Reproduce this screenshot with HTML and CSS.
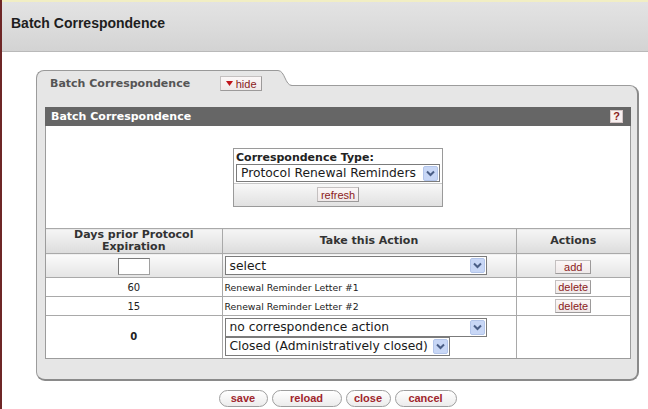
FILE: index.html
```html
<!DOCTYPE html>
<html>
<head>
<meta charset="utf-8">
<title>Batch Correspondence</title>
<link rel="stylesheet" href="styles.css">
</head>
<body>
<div class="page">
  <div class="topstrip"></div>
  <header class="header"><h1>Batch Correspondence</h1></header>
  <main class="main">
    <section class="panel">
      <div class="tabrow">
        <div class="tab">
          <span class="tab-label">Batch Correspondence</span>
          <button class="btn-sm btn-hide"><svg class="tri" width="7" height="5" viewBox="0 0 7 5"><path d="M0 0 H7 L3.5 5 Z" fill="#c0141b"/></svg> hide</button>
        </div>
        <svg class="tabcurve" width="14" height="16" viewBox="0 0 14 16">
          <path d="M0 0.5 C7 0.5 7 15.5 14 15.5 L14 16 L0 16 Z" fill="#e6e6e6"/>
          <path d="M0 0.5 C7 0.5 7 15.5 14 15.5" fill="none" stroke="#999" stroke-width="1"/>
        </svg>
      </div>
      <div class="panel-body">
        <div class="subhead"><span>Batch Correspondence</span><span class="help">?</span></div>
        <div class="content">
          <div class="typebox">
            <div class="typebox-top">
              <div class="typebox-label">Correspondence Type:</div>
              <div class="sel sel-type"><span>Protocol Renewal Reminders</span><svg class="arrow" width="15" height="15" viewBox="0 0 15 15"><rect x="0.5" y="0.5" width="14" height="14" rx="1.5" fill="#c8d7f6" stroke="#b3c5ea"/><path d="M4 5.5 L7.5 9 L11 5.5" fill="none" stroke="#4a5e86" stroke-width="2"/></svg></div>
            </div>
            <div class="typebox-bottom"><button class="btn-sm btn-refresh">refresh</button></div>
          </div>
          <table class="grid">
            <colgroup><col class="c1"><col class="c2"><col class="c3"></colgroup>
            <tr class="head">
              <th>Days prior Protocol<br>Expiration</th>
              <th>Take this Action</th>
              <th>Actions</th>
            </tr>
            <tr class="addrow">
              <td class="center"><input class="days" type="text"></td>
              <td><div class="sel sel-wide"><span>select</span><svg class="arrow" width="15" height="15" viewBox="0 0 15 15"><rect x="0.5" y="0.5" width="14" height="14" rx="1.5" fill="#c8d7f6" stroke="#b3c5ea"/><path d="M4 5.5 L7.5 9 L11 5.5" fill="none" stroke="#4a5e86" stroke-width="2"/></svg></div></td>
              <td class="center"><button class="btn-sm btn-row">add</button></td>
            </tr>
            <tr class="datarow">
              <td class="center">60</td>
              <td class="txt">Renewal Reminder Letter #1</td>
              <td class="center"><button class="btn-sm btn-row">delete</button></td>
            </tr>
            <tr class="datarow">
              <td class="center">15</td>
              <td class="txt">Renewal Reminder Letter #2</td>
              <td class="center"><button class="btn-sm btn-row">delete</button></td>
            </tr>
            <tr class="lastrow">
              <td class="center bold">0</td>
              <td>
                <div class="sel sel-wide"><span>no correspondence action</span><svg class="arrow" width="15" height="15" viewBox="0 0 15 15"><rect x="0.5" y="0.5" width="14" height="14" rx="1.5" fill="#c8d7f6" stroke="#b3c5ea"/><path d="M4 5.5 L7.5 9 L11 5.5" fill="none" stroke="#4a5e86" stroke-width="2"/></svg></div>
                <div class="sel sel-closed"><span>Closed (Administratively closed)</span><svg class="arrow" width="15" height="15" viewBox="0 0 15 15"><rect x="0.5" y="0.5" width="14" height="14" rx="1.5" fill="#c8d7f6" stroke="#b3c5ea"/><path d="M4 5.5 L7.5 9 L11 5.5" fill="none" stroke="#4a5e86" stroke-width="2"/></svg></div>
              </td>
              <td></td>
            </tr>
          </table>
        </div>
      </div>
    </section>
    <div class="actions">
      <button class="pill w-save">save</button>
      <button class="pill w-reload">reload</button>
      <button class="pill w-close">close</button>
      <button class="pill w-cancel">cancel</button>
    </div>
  </main>
</div>
</body>
</html>
```
FILE: styles.css
```css
* { box-sizing: border-box; }
html, body { margin: 0; padding: 0; background: #fff; }
body { font-family: "DejaVu Sans", Verdana, sans-serif; color: #222; }

.page { border-left: 2px solid #6e2626; min-height: 409px; }
.topstrip { height: 2px; background: #f1eec4; }
.header {
  height: 50px;
  background: linear-gradient(#e3e3e3, #dadada 60%, #d3d3d3);
  border-bottom: 1px solid #b9b9b9;
}
.header h1 {
  margin: 0;
  padding: 13px 0 0 9px;
  font: bold 14px/17px "Liberation Sans", Arial, sans-serif;
  color: #1e1e1e;
}

.main { padding-top: 18px; }
.panel { margin-left: 34px; width: 603px; }

.tabrow { display: flex; align-items: flex-start; }
.tab {
  position: relative;
  z-index: 1;
  width: 242px;
  height: 16px;
  margin-bottom: -1px;
  background: #e6e6e6;
  border: 1px solid #999;
  border-right: none;
  border-bottom: none;
  border-top-left-radius: 8px;
  display: flex;
  align-items: flex-start;
  padding: 6px 0 0 13px;
}
.tab-label { font-size: 11px; font-weight: bold; line-height: 13px; color: #555; white-space: nowrap; }
.tabcurve { position: relative; z-index: 1; display: block; margin-bottom: -1px; }

.btn-sm {
  font: 11px/12px "Liberation Sans", Arial, sans-serif;
  color: #8b1a1a;
  background: linear-gradient(#fbf7f7, #efe9e9);
  border: 1px solid #c4c0c0;
  border-right-color: #9c9a9a;
  border-bottom-color: #9c9a9a;
  height: 15px;
  padding: 0;
  margin: 0;
  cursor: pointer;
}
.btn-hide {
  width: 42px;
  margin-left: 30px;
  margin-top: -1px;
  display: inline-flex;
  align-items: center;
  justify-content: center;
  gap: 3px;
}
.tri { display: block; }

.panel-body {
  background: #e6e6e6;
  border: 1px solid #9c9c9c;
  border-right: 2px solid #8a8a8a;
  border-bottom: 2px solid #8a8a8a;
  border-radius: 0 9px 9px 9px;
  padding: 21px 6px 20px 8px;
}
.subhead {
  height: 19px;
  background: #666;
  color: #fff;
  font-size: 11px;
  font-weight: bold;
  display: flex;
  align-items: center;
  justify-content: space-between;
  padding: 0 8px 0 6px;
}
.help {
  width: 13px;
  height: 13px;
  background: #f7f0f0;
  border: 1px solid #d6c6c6;
  color: #8b1a1a;
  font: bold 11px/11px "Liberation Sans", Arial, sans-serif;
  text-align: center;
}

.content {
  background: #fff;
  border: 1px solid #9c9c9c;
  border-top: none;
  padding-top: 22px;
}

.typebox {
  width: 210px;
  margin: 0 auto 21px;
  border: 1px solid #9a9a9a;
}
.typebox-top { padding: 2px 2px 1px 2px; }
.typebox-label { font-size: 11px; font-weight: bold; line-height: 13px; color: #222; }
.typebox-bottom {
  border-top: 1px solid #c8c8c8;
  background: linear-gradient(#f8f8f8, #e1e1e1);
  display: flex;
  justify-content: center;
  padding: 3px 0 4px;
}
.btn-refresh { width: 42px; }

.sel {
  display: flex;
  align-items: center;
  justify-content: space-between;
  background: #fff;
  border: 1px solid #7b7b7b;
  height: 18px;
  padding: 0 1px 0 4px;
  font-size: 12.3px;
  color: #1a1a1a;
  white-space: nowrap;
}
.sel .arrow { display: block; flex: none; }
.sel-type { width: 204px; }
.sel-wide { width: 262px; height: 19px; }
.sel-closed { width: 225px; height: 19px; }

.grid { width: 100%; border-collapse: collapse; table-layout: fixed; }
.grid col.c1 { width: 176px; }
.grid col.c2 { width: 294px; }
.grid col.c3 { width: 114px; }
.grid th, .grid td {
  border-top: 1px solid #a9a9a9;
  border-left: 1px solid #a9a9a9;
  padding: 0 2px;
}
.grid th:first-child, .grid td:first-child { border-left: none; }
.grid .head th {
  height: 25px;
  background: linear-gradient(#f5f5f5, #dcdcdc);
  font-size: 11px;
  line-height: 12px;
  font-weight: bold;
  color: #333;
  text-align: center;
  vertical-align: middle;
}
.addrow td { height: 24px; background: linear-gradient(#fbfbfb, #e4e4e4); }
.datarow td { height: 19px; font-size: 10px; color: #222; }
.lastrow td { height: 42px; }
.center { text-align: center; vertical-align: middle; }
.grid td.txt { font-size: 9.3px; }
.bold { font-weight: bold; font-size: 10px; }
.days {
  width: 32px;
  height: 17px;
  border: 1px solid #a0a0a0;
  border-top-color: #7a7a7a;
  border-left-color: #7a7a7a;
  background: #fff;
  margin: 0;
  padding: 0;
  display: inline-block;
  vertical-align: middle;
}
.btn-row { width: 36px; height: 14px; }

.actions {
  margin: 9px 0 0 34px;
  width: 603px;
  display: flex;
  justify-content: center;
  gap: 4px;
}
.pill {
  height: 17px;
  border: 1px solid #9e9e9e;
  border-radius: 9px;
  background: linear-gradient(#ffffff, #ececec);
  color: #a0262c;
  font: bold 11px/15px "Liberation Sans", Arial, sans-serif;
  padding: 0;
  cursor: pointer;
}
.w-save { width: 49px; }
.w-reload { width: 70px; }
.w-close { width: 45px; }
.w-cancel { width: 62px; }
```
